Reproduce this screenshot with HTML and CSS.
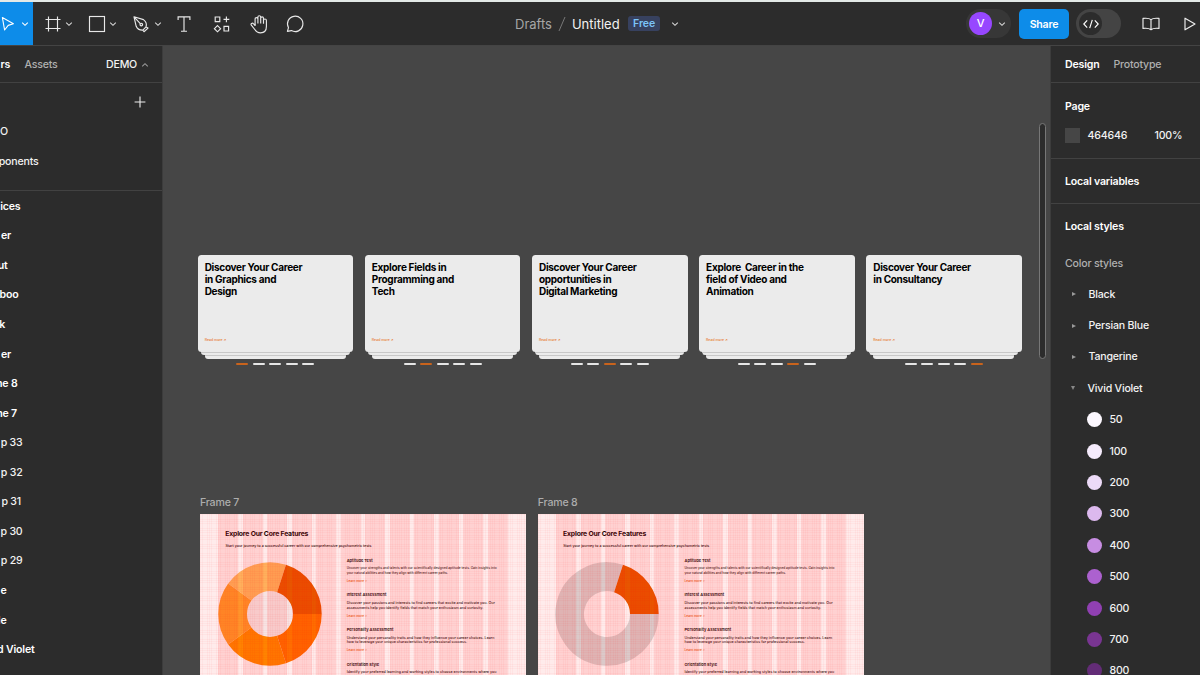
FILE: index.html
```html
<!DOCTYPE html>
<html lang="en">
<head>
<meta charset="utf-8">
<title>Untitled</title>
<link rel="stylesheet" href="styles.css">
</head>
<body>
<svg class="defs" width="0" height="0">
  <symbol id="chev" viewBox="0 0 8 8"><path d="M1.2 2.6 4 5.3 6.8 2.6" fill="none" stroke="currentColor" stroke-width="1.1"/></symbol>
</svg>
<header class="toolbar">
  <div class="tools">
    <div class="tool tool-active">
      <svg class="cursor" width="14" height="18" viewBox="0 0 14 18"><path d="M2.4 2.6 13.4 8.8 8.2 10.4 4.6 15Z" fill="none" stroke="currentColor" stroke-width="1.1" stroke-linejoin="round"/></svg>
      <svg class="chev"><use href="#chev"/></svg>
    </div>
    <div class="tool">
      <svg class="icon" viewBox="0 0 24 24"><path d="M7.5 4.5v15M16.5 4.5v15M4.5 7.5h15M4.5 16.5h15"/></svg>
      <svg class="chev"><use href="#chev"/></svg>
    </div>
    <div class="tool">
      <svg class="icon" viewBox="0 0 24 24"><rect x="4.5" y="4.5" width="15" height="15"/></svg>
      <svg class="chev"><use href="#chev"/></svg>
    </div>
    <div class="tool">
      <svg class="icon" viewBox="0 0 24 24"><path d="M5 4.8 14.5 7.6Q18.4 10.5 17 14.9L13.9 18.1Q8.7 18.3 7.2 14.3ZM5 4.8l6.3 6.8M17 14.9l2 1.2-4 3.6-1.1-1.6" stroke-linejoin="round"/><circle cx="12.3" cy="12.6" r="1.3"/></svg>
      <svg class="chev chev-pen"><use href="#chev"/></svg>
    </div>
    <div class="tool tool-single">
      <svg class="icon" viewBox="0 0 24 24"><path d="M6.1 8V4.9h11.8V8M12 4.9v14.2M9 19.2h6"/></svg>
    </div>
    <div class="tool tool-single">
      <svg class="icon" viewBox="0 0 24 24"><path d="M5.2 5h4.6v4.6H5.2ZM14 14.4h4.6V19H14ZM7.5 13.6l3.1 3.1-3.1 3.1-3.1-3.1ZM16.4 4.4v5.8M13.5 7.3h5.8"/></svg>
    </div>
    <div class="tool tool-hand">
      <svg class="icon" viewBox="0 0 24 24"><path d="M8.1 13.5V7a1.4 1.4 0 0 1 2.8 0V5.1a1.4 1.4 0 0 1 2.8 0V6.3a1.4 1.4 0 0 1 2.8 0V8.4a1.4 1.4 0 0 1 2.9 0V14.5C19.4 18.6 17 20.8 13.5 20.8 10.2 20.8 8.9 19.2 7.4 17L4.3 13.1C3.4 11.6 5.4 10.5 6.4 11.7ZM10.9 7v4.5M13.7 6v5.5M16.5 8v3.8" stroke-linejoin="round"/></svg>
    </div>
    <div class="tool tool-comment">
      <svg class="icon" viewBox="0 0 24 24"><path d="M4.4 19.4 5.5 15.7A7.7 7.7 0 1 1 8.4 18.6Z" stroke-linejoin="round"/></svg>
    </div>
  </div>
  <div class="filename">
    <span class="folder">Drafts</span>
    <svg class="slash" viewBox="0 0 8 16"><path d="M1 15 7 1" stroke="#777" fill="none"/></svg>
    <span class="file">Untitled</span>
    <span class="badge">Free</span>
    <svg class="chev"><use href="#chev"/></svg>
  </div>
  <div class="actions">
    <div class="account"><span class="avatar">V</span><svg class="chev"><use href="#chev"/></svg></div>
    <div class="share">Share</div>
    <div class="devmode"><span class="knob"><svg width="18" height="12" viewBox="0 0 18 12"><path d="M5.2 2.4 1.8 6l3.4 3.6M12.8 2.4 16.2 6l-3.4 3.6M10.3 1.8 7.7 10.2" fill="none" stroke="#fff" stroke-width="1.15"/></svg></span></div>
    <svg class="book" viewBox="0 0 18 14"><path d="M9 2.6C7.5 1.2 5 1 1 1.4v10c3.6-.4 6.2-.2 8 1.3 1.8-1.5 4.4-1.7 8-1.3v-10C13 1 10.5 1.2 9 2.6ZM9 2.6V12.5" fill="none" stroke="#eee" stroke-width="1.15" stroke-linejoin="round"/></svg>
    <svg class="play" viewBox="0 0 12 14"><path d="M1 1.2V12.8L11 7Z" fill="none" stroke="#eee" stroke-width="1.15" stroke-linejoin="round"/></svg>
  </div>
</header>
<main class="workspace">
  <aside class="layers">
    <div class="tabs">
      <div class="clip tab-layers"><b>rs</b></div>
      <span class="muted assets">Assets</span>
      <span class="pagename">DEMO</span>
      <svg class="chev up"><use href="#chev"/></svg>
    </div>
    <div class="pages">
      <div class="add"><svg width="12" height="12" viewBox="0 0 12 12"><path d="M6 .6v10.8M.6 6h10.8" stroke="#eee" stroke-width="1.1"/></svg></div>
      <div class="row"><div class="clip" style="width:8px">O</div></div>
      <div class="row"><div class="clip" style="width:38.5px">ponents</div></div>
    </div>
    <div class="tree">
      <div class="row"><b class="clip" style="width:20.5px">ices</b></div>
      <div class="row"><b class="clip" style="width:11px">er</b></div>
      <div class="row"><b class="clip" style="width:7.5px">ut</b></div>
      <div class="row"><b class="clip" style="width:18.5px">boo</b></div>
      <div class="row"><b class="clip" style="width:5px">k</b></div>
      <div class="row"><b class="clip" style="width:11px">er</b></div>
      <div class="row"><b class="clip" style="width:17.5px">me 8</b></div>
      <div class="row"><b class="clip" style="width:17px">me 7</b></div>
      <div class="row"><span class="clip" style="width:22.5px">p 33</span></div>
      <div class="row"><span class="clip" style="width:22.5px">p 32</span></div>
      <div class="row"><span class="clip" style="width:21px">p 31</span></div>
      <div class="row"><span class="clip" style="width:22.5px">p 30</span></div>
      <div class="row"><span class="clip" style="width:22.5px">p 29</span></div>
      <div class="row"><b class="clip" style="width:6.5px">e</b></div>
      <div class="row"><b class="clip" style="width:6.5px">le</b></div>
      <div class="row"><b class="clip" style="width:34.5px">d Violet</b></div>
    </div>
  </aside>
  <section class="canvas">
    <div class="cards">
      <article class="stack"><div class="card"><h2>Discover Your Career<br>in Graphics and<br>Design</h2><p>Read more ↗</p></div><i class="under a"></i><i class="under b"></i><div class="dots"><i class="on"></i><i></i><i></i><i></i><i></i></div></article>
      <article class="stack"><div class="card"><h2>Explore Fields in<br>Programming and<br>Tech</h2><p>Read more ↗</p></div><i class="under a"></i><i class="under b"></i><div class="dots"><i></i><i class="on"></i><i></i><i></i><i></i></div></article>
      <article class="stack"><div class="card"><h2>Discover Your Career<br>opportunities in<br>Digital Marketing</h2><p>Read more ↗</p></div><i class="under a"></i><i class="under b"></i><div class="dots"><i></i><i></i><i class="on"></i><i></i><i></i></div></article>
      <article class="stack"><div class="card"><h2>Explore&nbsp; Career in the<br>field of Video and<br>Animation</h2><p>Read more ↗</p></div><i class="under a"></i><i class="under b"></i><div class="dots"><i></i><i></i><i></i><i class="on"></i><i></i></div></article>
      <article class="stack"><div class="card"><h2>Discover Your Career<br>in Consultancy</h2><p>Read more ↗</p></div><i class="under a"></i><i class="under b"></i><div class="dots"><i></i><i></i><i></i><i></i><i class="on"></i></div></article>
    </div>
    <div class="frames">
      <div class="frame">
        <div class="label">Frame 7</div>
        <div class="art">
          <h3>Explore Our Core Features</h3>
          <p class="lead">Start your journey to a successful career with our comprehensive psychometric tests</p>
          <div class="cols">
            <svg class="donut" viewBox="-52 -52 104 104">
              <g fill="none" stroke-width="28.7">
                <path stroke="#ffb05c" d="M11.54-35.52A37.35 37.35 0 0 0-30.22-21.95"/>
                <path stroke="#ff942a" d="M-30.22-21.95A37.35 37.35 0 0 0-30.22 21.95"/>
                <path stroke="#ff8300" d="M-30.22 21.95A37.35 37.35 0 0 0 11.54 35.52"/>
                <path stroke="#ff6d00" d="M11.54 35.52A37.35 37.35 0 0 0 37.35 0"/>
                <path stroke="#e85500" d="M37.35 0A37.35 37.35 0 0 0 11.54-35.52"/>
              </g>
              <circle r="23" fill="#000" fill-opacity=".03"/>
            </svg>
            <div class="features">
              <section><h4>Aptitude Test</h4><p class="tight">Uncover your strengths and talents with our scientifically designed aptitude tests. Gain insights into<br>your natural abilities and how they align with different career paths.</p><a>Learn more &gt;</a></section>
              <section><h4>Interest Assessment</h4><p>Discover your passions and interests to find careers that excite and motivate you. Our<br>assessments help you identify fields that match your enthusiasm and curiosity.</p><a>Learn more &gt;</a></section>
              <section><h4>Personality Assessment</h4><p>Understand your personality traits and how they influence your career choices. Learn<br>how to leverage your unique characteristics for professional success.</p><a>Learn more &gt;</a></section>
              <section><h4>Orientation Style</h4><p>Identify your preferred learning and working styles to choose environments where you</p></section>
            </div>
          </div>
        </div>
      </div>
      <div class="frame">
        <div class="label">Frame 8</div>
        <div class="art">
          <h3>Explore Our Core Features</h3>
          <p class="lead">Start your journey to a successful career with our comprehensive psychometric tests</p>
          <div class="cols">
            <svg class="donut" viewBox="-52 -52 104 104">
              <g fill="none" stroke-width="28.7">
                <path stroke="#000" stroke-opacity=".14" d="M11.54-35.52A37.35 37.35 0 1 0 37.35 0"/>
                <path stroke="#e85500" d="M37.35 0A37.35 37.35 0 0 0 11.54-35.52"/>
              </g>
            </svg>
            <div class="features">
              <section><h4>Aptitude Test</h4><p class="tight">Uncover your strengths and talents with our scientifically designed aptitude tests. Gain insights into<br>your natural abilities and how they align with different career paths.</p><a>Learn more &gt;</a></section>
              <section><h4>Interest Assessment</h4><p>Discover your passions and interests to find careers that excite and motivate you. Our<br>assessments help you identify fields that match your enthusiasm and curiosity.</p><a>Learn more &gt;</a></section>
              <section><h4>Personality Assessment</h4><p>Understand your personality traits and how they influence your career choices. Learn<br>how to leverage your unique characteristics for professional success.</p><a>Learn more &gt;</a></section>
              <section><h4>Orientation Style</h4><p>Identify your preferred learning and working styles to choose environments where you</p></section>
            </div>
          </div>
        </div>
      </div>
    </div>
    <div class="scrollbar"></div>
  </section>
  <aside class="inspector">
    <div class="itabs"><b>Design</b><span class="muted">Prototype</span></div>
    <div class="ipage">
      <b>Page</b>
      <div class="fillrow"><i class="chip"></i><span class="hex">464646</span><span>100%</span></div>
    </div>
    <div class="ivars"><b>Local variables</b></div>
    <div class="istyles">
      <b>Local styles</b>
      <div class="muted sub">Color styles</div>
      <div class="srow"><i class="tri"></i><span>Black</span></div>
      <div class="srow"><i class="tri"></i><span>Persian Blue</span></div>
      <div class="srow"><i class="tri"></i><span>Tangerine</span></div>
      <div class="srow"><i class="tri open"></i><span>Vivid Violet</span></div>
      <div class="srow swatch"><i style="background:#fbf7fe"></i><span>50</span></div>
      <div class="srow swatch"><i style="background:#f5ebfc"></i><span>100</span></div>
      <div class="srow swatch"><i style="background:#ecdaf7"></i><span>200</span></div>
      <div class="srow swatch"><i style="background:#dcb9ee"></i><span>300</span></div>
      <div class="srow swatch"><i style="background:#c78de2"></i><span>400</span></div>
      <div class="srow swatch"><i style="background:#ac61cf"></i><span>500</span></div>
      <div class="srow swatch"><i style="background:#9040b2"></i><span>600</span></div>
      <div class="srow swatch"><i style="background:#793592"></i><span>700</span></div>
      <div class="srow swatch"><i style="background:#632c77"></i><span>800</span></div>
    </div>
  </aside>
</main>
</body>
</html>
```

FILE: styles.css
```css
* { box-sizing: border-box; }
body {
  margin: 0;
  width: 1200px;
  height: 675px;
  overflow: hidden;
  display: flex;
  flex-direction: column;
  border-top: 2px solid #e3e9e7;
  background: #2c2c2c;
  color: #f2f2f2;
  font: 450 10.6px/16px Inter, "Liberation Sans", sans-serif;
  letter-spacing: -.2px;
}
b { font-weight: 600; color: #fff; }
h2, h3, h4, p { margin: 0; }
.defs { position: absolute; }
.muted { color: #b0b0b0; }
.chev { width: 8px; height: 8px; flex: none; color: #d8d8d8; }

/* Toolbar */
.toolbar {
  height: 44px;
  flex: none;
  display: flex;
  align-items: center;
  border-bottom: 1px solid #444;
  white-space: nowrap;
}
.tools { display: flex; align-self: stretch; width: 515px; color: #e8e8e8; }
.tool { width: 44px; display: flex; align-items: center; padding-left: 8px; }
.tool-active { width: 33px; background: #0d8ce9; color: #fff; padding-left: 0; }
.tool-active .chev { margin-left: 6.5px; color: #fff; }
.tool-single { width: 38px; padding-left: 7px; }
.tool-hand { width: 36px; padding-left: 5.5px; }
.tool-comment { width: 36px; padding-left: 6px; }
.icon { width: 24px; height: 24px; fill: none; stroke: currentColor; stroke-width: 1.15; }
.chev-pen { margin-left: 1px; }
.filename { display: flex; align-items: center; width: 451px; font-size: 13px; font-weight: 400; letter-spacing: 0; }
.folder { color: #a6a6a6; }
.slash { width: 8px; height: 16px; margin: 0 6px; }
.badge {
  margin-left: 8.5px;
  width: 32px;
  height: 15px;
  border-radius: 3px;
  background: #37415f;
  color: #7cc4f8;
  font-size: 10.5px;
  font-weight: 600;
  line-height: 15px;
  text-align: center;
}
.filename .chev { margin-left: 11px; }
.actions { display: flex; align-items: center; }
.account {
  width: 45px;
  height: 29px;
  border-radius: 15px;
  background: #373737;
  display: flex;
  align-items: center;
  padding-left: 3px;
}
.account .chev { margin-left: 5.5px; }
.avatar {
  width: 23px;
  height: 23px;
  border-radius: 50%;
  background: #9747ff;
  color: #fff;
  text-align: center;
  line-height: 23px;
  font-size: 11px;
  font-weight: 500;
}
.share {
  margin-left: 8px;
  width: 50px;
  height: 30px;
  border-radius: 5px;
  background: #0d8ce9;
  color: #fff;
  font-weight: 600;
  line-height: 31px;
  text-align: center;
}
.devmode {
  margin-left: 7px;
  width: 45px;
  height: 29px;
  border-radius: 15px;
  background: #444;
  padding: 3px;
}
.knob {
  width: 23px;
  height: 23px;
  border-radius: 50%;
  background: #2c2c2c;
  display: flex;
  align-items: center;
  justify-content: center;
}
.book { width: 18px; height: 14px; margin-left: 20.5px; }
.play { width: 12px; height: 14px; margin-left: 24.5px; }

/* Workspace */
.workspace { flex: 1; min-height: 0; display: grid; grid-template-columns: 163px 887px 150px; }
.workspace > * { min-width: 0; overflow: hidden; }

/* Left panel */
.layers { border-right: 1px solid #3c3c3c; }
.clip { display: flex; justify-content: flex-end; white-space: pre; flex: none; }
.tabs { height: 37px; padding-top: 1px; display: flex; align-items: center; border-bottom: 1px solid #424242; }
.tab-layers { width: 10px; }
.assets { margin-left: 14.5px; width: 81.5px; }
.up { transform: rotate(180deg); margin-left: 3.5px; color: #999; }
.pages { height: 108px; border-bottom: 1px solid #424242; }
.add { height: 34px; padding: 13px 0 0 134px; }
.row { height: 29.57px; padding-top: 1px; display: flex; align-items: center; }
.tree .row:first-child { height: 30px; }

/* Canvas */
.canvas { background: #464646; position: relative; }
.cards { display: flex; gap: 11.35px; padding: 209px 0 0 34.5px; }
.stack { width: 155.8px; flex: none; display: flex; flex-direction: column; align-items: center; }
.card {
  width: 100%;
  height: 96.5px;
  border-radius: 3.5px;
  background: #ebebeb;
  color: #000;
  padding: 5.8px 7.2px 6.5px;
  display: flex;
  flex-direction: column;
  justify-content: space-between;
}
.card h2 { font-size: 10px; line-height: 12.3px; font-weight: 650; letter-spacing: -.3px; white-space: nowrap; }
.card p { font-size: 3.5px; line-height: 10px; letter-spacing: 0; color: #e8792e; }
.under { height: 3.8px; background: #ebebeb; border-top: .7px solid #c8c8c8; border-radius: 0 0 3px 3px; }
.a { width: 149px; }
.b { width: 141px; }
.dots { display: flex; gap: 4.5px; padding-top: 4px; }
.dots i { width: 12px; height: 2px; border-radius: 1px; background: #e6e6e6; }
.dots .on { background: #c9631c; }
.frames { display: flex; gap: 11.5px; padding: 129.5px 0 0 37px; }
.frame { width: 326.3px; flex: none; }
.label { height: 19.2px; line-height: 16px; color: #adadad; }
.art {
  position: relative;
  height: 180px;
  background: #ffebeb;
  color: #1c0608;
  padding-top: 14px;
  white-space: nowrap;
  letter-spacing: 0;
}
/* Layout grid drawn over the artwork */
.art::after {
  content: "";
  position: absolute;
  inset: 0;
  background:
    repeating-linear-gradient(90deg, rgba(255,0,0,.11) 0 20px, transparent 20px 24.53px) 18.1px 0 / 289.8px 100% no-repeat,
    repeating-linear-gradient(90deg, rgba(255,0,0,.035) 0 .8px, transparent .8px 2.264px),
    repeating-linear-gradient(0deg, rgba(255,0,0,.035) 0 .8px, transparent .8px 2.264px);
}
.art h3 { font-size: 6.8px; line-height: 11px; font-weight: 700; letter-spacing: -.16px; padding-left: 25.3px; }
.lead { font-size: 3.6px; line-height: 6px; padding: 4.5px 0 0 25.5px; }
.cols { display: flex; align-items: flex-start; padding: 8.4px 0 0 17.7px; }
.donut { width: 104px; height: 104px; flex: none; margin-top: 4.6px; }
.features { padding-left: 25px; }
.features section { height: 34.7px; font-size: 3.63px; line-height: 4.5px; }
.features h4 { font-size: 4px; line-height: 6px; font-weight: 600; padding-bottom: 2.7px; }
.features p { color: #3a1a1c; }
.features .tight { font-size: 3.17px; }
.features a { display: block; padding-top: 3.6px; font-size: 3.2px; color: #e8590c; }
.scrollbar {
  position: absolute;
  left: 875.5px;
  top: 76.5px;
  width: 7px;
  height: 236px;
  border: 1px solid #777;
  border-radius: 4px;
  background: #2c2c2c;
}

/* Right panel */
.inspector { border-left: 1px solid #3c3c3c; }
.inspector > * { padding-left: 14px; }
.itabs { height: 37px; padding-top: 1px; display: flex; align-items: center; gap: 14px; border-bottom: 1px solid #424242; }
.ipage { height: 75.5px; padding-top: 15.6px; border-bottom: 1px solid #424242; }
.fillrow { display: flex; align-items: center; padding-top: 13px; }
.chip { width: 15px; height: 15px; background: #464646; margin-right: 7.5px; }
.hex { width: 67px; }
.ivars { height: 45.5px; padding-top: 15px; border-bottom: 1px solid #424242; }
.istyles { padding-top: 14.5px; }
.sub { padding-top: 21px; margin-bottom: 7px; }
.srow { height: 31.4px; display: flex; align-items: center; }
.srow span { padding-top: .8px; }
.tri { margin: 0 13px 0 6.5px; border: 2.5px solid transparent; border-left: 4px solid #999; border-right: 0; }
.tri.open { margin: 0 12.5px 0 6px; border: 2.5px solid transparent; border-top: 4px solid #888; border-bottom: 0; }
.swatch i { width: 15px; height: 15px; border-radius: 50%; margin: 0 7.5px 0 22px; }
```
